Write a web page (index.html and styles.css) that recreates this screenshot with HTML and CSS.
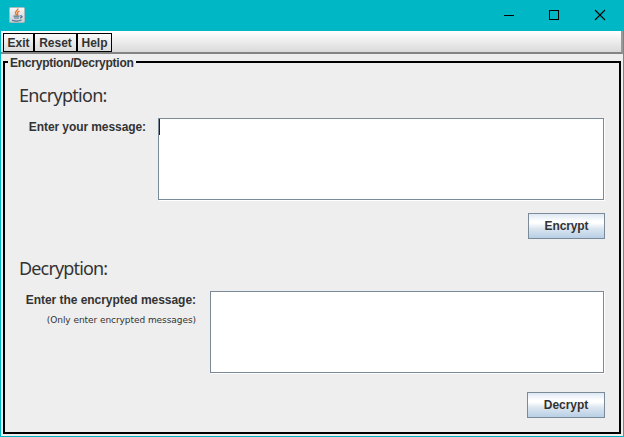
FILE: index.html
```html
<!DOCTYPE html>
<html lang="en">
<head>
<meta charset="utf-8">
<title>Encryption/Decryption</title>
<link rel="stylesheet" href="styles.css">
</head>
<body>
<div class="window">
  <header class="titlebar">
    <svg class="app-icon" width="16" height="16" viewBox="0 0 16 16">
      <defs><linearGradient id="tile" x1="0" y1="0" x2="0" y2="1"><stop offset="0" stop-color="#f8f8f8"/><stop offset="1" stop-color="#c9cdd0"/></linearGradient></defs>
      <rect x=".5" y=".5" width="15" height="15" rx="1" fill="url(#tile)" stroke="#a9b9bd"/>
      <path d="M8.800 1.500C9.500 3.500 5.500 4.300 6.500 6.300L7.700 8.300M10.500 4.200C8 5.300 8 6 8.800 7L8.300 8.500" fill="none" stroke="#e8772c" stroke-width="1.400"/>
      <path d="M4.500 9.200H10.500M5 11H10M3 13.200C6 14.200 10 14.200 12.500 13M11 9C14 8.300 13.500 10.700 11 11.200" fill="none" stroke="#51758f" stroke-width="1.200"/>
    </svg>
    <div class="controls">
      <svg width="46" height="30" viewBox="0 0 46 30"><path d="M19 15.500H29" stroke="#000"/></svg>
      <svg width="46" height="30" viewBox="0 0 46 30"><rect x="18.500" y="10.500" width="9" height="9" fill="none" stroke="#000"/></svg>
      <svg width="46" height="30" viewBox="0 0 46 30"><path d="M18 10L28 20M28 10L18 20" stroke="#000" stroke-width="1.100"/></svg>
    </div>
  </header>
  <nav class="menubar">
    <button class="menu exit"><span>Exit</span></button>
    <button class="menu reset"><span>Reset</span></button>
    <button class="menu help"><span>Help</span></button>
  </nav>
  <main class="panel">
    <div class="legend"><span>Encryption/Decryption</span></div>
    <section class="section">
      <h2 class="heading">Encryption:</h2>
      <div class="row">
        <div class="labels first"><span class="label message">Enter your message:</span></div>
        <div class="field"><i class="caret"></i></div>
      </div>
      <button class="action encrypt"><span>Encrypt</span></button>
    </section>
    <section class="section second">
      <h2 class="heading">Decryption:</h2>
      <div class="row">
        <div class="labels last"><span class="label encrypted">Enter the encrypted message:</span><span class="hint">(Only enter encrypted messages)</span></div>
        <div class="field"></div>
      </div>
      <button class="action decrypt"><span>Decrypt</span></button>
    </section>
  </main>
</div>
</body>
</html>
```
FILE: styles.css
```css
* { box-sizing: border-box; }
body {
  margin: 0;
  font: bold 12px/14px "Liberation Sans", Arial, sans-serif;
  color: #333;
  background: #00b7c6;
}
.window {
  width: 624px;
  height: 437px;
  padding: 0 1px 1px;
  display: flex;
  flex-direction: column;
}
.titlebar {
  height: 31px;
  display: flex;
  justify-content: space-between;
  padding-left: 8px;
}
.app-icon { margin-top: 7px; }
.controls { display: flex; }
.menubar {
  height: 23px;
  display: flex;
  padding: 2px 0 0 2px;
  background: linear-gradient(#fff, #dadada);
  border-right: 2px solid #999;
  border-bottom: 2px solid #848484;
}
button { font: inherit; color: inherit; padding: 0; white-space: nowrap; }
.menu { height: 19px; background: transparent; border: 1px solid #000; }
.exit { width: 31px; }
.reset { width: 43px; }
.help { width: 35px; }
.panel {
  flex: 1;
  margin: 7px 2px 2px;
  border: 2px solid #000;
  box-shadow: 0 0 0 7px #eee;
  background: #eee;
  clip-path: inset(-7px -2px -2px);
  padding: 0 14px;
}
.legend { height: 14px; margin: -7px 0 0 -11px; letter-spacing: -.24px; }
.legend span { display: inline-block; height: 14px; padding: 0 2px; background: #eee; }
.heading {
  margin: 14px 0 0;
  height: 24px;
  font: 18px/23px "Noto Sans", sans-serif;
  letter-spacing: -.7px;
}
.row { display: flex; height: 83px; margin-top: 10px; padding-right: 1px; }
.labels { display: flex; flex-direction: column; align-items: flex-end; padding-top: 2px; white-space: nowrap; }
.first { width: 139px; padding-right: 12px; }
.last { width: 191px; padding-right: 14px; }
.message { letter-spacing: -.08px; }
.encrypted { letter-spacing: -.04px; }
.hint { font: 9px/13px "DejaVu Sans", sans-serif; letter-spacing: -.06px; margin-top: 7px; }
.field {
  flex: 1;
  height: 82px;
  background: #fff;
  border: 1px solid #7a8a99;
  box-shadow: 1px 1px #fff;
}
.caret { display: block; width: 1px; height: 16px; background: #222; }
.action {
  display: block;
  height: 26px;
  margin: 12px 0 0 auto;
  border: 1px solid #7a8a99;
  background: linear-gradient(#dde8f3 0, #fff 30%, #fff 38%, #dce6f0 60%, #b8cfe5 100%);
}
.encrypt { width: 77px; letter-spacing: -.1px; }
.decrypt { width: 78px; margin-top: 18px; letter-spacing: -.05px; }
.second .heading { margin-top: 18px; letter-spacing: -.85px; }
```
